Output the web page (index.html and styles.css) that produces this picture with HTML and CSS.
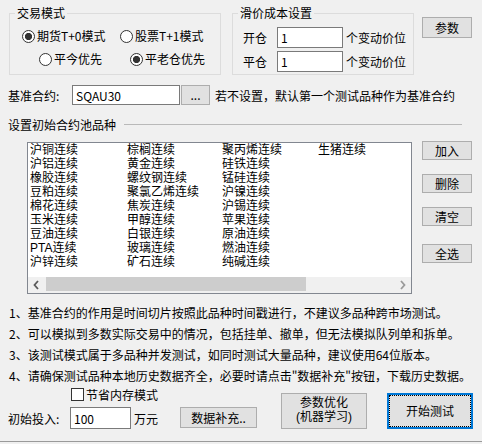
FILE: index.html
```html
<!DOCTYPE html>
<html lang="zh-CN">
<head>
    <meta charset="UTF-8">
    <title>多品种测试设置</title>
    <link rel="stylesheet" href="styles.css">
</head>
<body>
    <div class="window">
        <div class="top">
            <fieldset class="group mode">
                <legend>交易模式</legend>
                <div class="radio-row row-a">
                    <label class="radio w98 checked"><span class="dot"></span>期货T+0模式</label>
                    <label class="radio"><span class="dot"></span>股票T+1模式</label>
                </div>
                <div class="radio-row row-b">
                    <label class="radio w91"><span class="dot"></span>平今优先</label>
                    <label class="radio checked"><span class="dot"></span>平老仓优先</label>
                </div>
            </fieldset>
            <fieldset class="group slip">
                <legend>滑价成本设置</legend>
                <div class="slip-row">
                    <span class="slip-label">开仓</span>
                    <input type="text" class="field slip-input" value="1">
                    <span class="unit">个变动价位</span>
                </div>
                <div class="slip-row second">
                    <span class="slip-label">平仓</span>
                    <input type="text" class="field slip-input" value="1">
                    <span class="unit">个变动价位</span>
                </div>
            </fieldset>
            <button type="button" class="btn params-btn">参数</button>
        </div>

        <div class="base-row">
            <span class="base-label">基准合约:</span>
            <input type="text" class="field base-input" value="SQAU30">
            <button type="button" class="btn dots-btn">...</button>
            <span class="base-hint">若不设置，默认第一个测试品种作为基准合约</span>
        </div>

        <div class="pool-title">
            <span>设置初始合约池品种</span>
            <span class="pool-line"></span>
        </div>

        <div class="pool">
            <div class="listbox">
                <div class="items">
                    <span>沪铜连续</span><span>沪铝连续</span><span>橡胶连续</span>
                    <span>豆粕连续</span><span>棉花连续</span><span>玉米连续</span>
                    <span>豆油连续</span><span>PTA连续</span><span>沪锌连续</span>
                    <span>棕榈连续</span><span>黄金连续</span><span>螺纹钢连续</span>
                    <span>聚氯乙烯连续</span><span>焦炭连续</span><span>甲醇连续</span>
                    <span>白银连续</span><span>玻璃连续</span><span>矿石连续</span>
                    <span>聚丙烯连续</span><span>硅铁连续</span><span>锰硅连续</span>
                    <span>沪镍连续</span><span>沪锡连续</span><span>苹果连续</span>
                    <span>原油连续</span><span>燃油连续</span><span>纯碱连续</span>
                    <span>生猪连续</span>
                </div>
                <div class="hscroll">
                    <span class="arrow">
                        <svg width="17" height="16" viewBox="0 0 17 16"><path d="M10 4 L6.5 8 L10 12" fill="none" stroke="#5a5a5a" stroke-width="1.8"/></svg>
                    </span>
                    <span class="track"><span class="thumb"></span></span>
                    <span class="arrow">
                        <svg width="17" height="16" viewBox="0 0 17 16"><path d="M7 4 L10.5 8 L7 12" fill="none" stroke="#9a9a9a" stroke-width="1.8"/></svg>
                    </span>
                </div>
            </div>
            <div class="side-btns">
                <button type="button" class="btn side add">加入</button>
                <button type="button" class="btn side del">删除</button>
                <button type="button" class="btn side clear">清空</button>
                <button type="button" class="btn side all">全选</button>
            </div>
        </div>

        <div class="notes">
            <p>1、基准合约的作用是时间切片按照此品种时间戳进行，不建议多品种跨市场测试。</p>
            <p>2、可以模拟到多数实际交易中的情况，包括挂单、撤单，但无法模拟队列单和拆单。</p>
            <p>3、该测试模式属于多品种并发测试，如同时测试大量品种，建议使用64位版本。</p>
            <p>4、请确保测试品种本地历史数据齐全，必要时请点击"数据补充"按钮，下载历史数据。</p>
        </div>

        <div class="bottom">
            <div class="bottom-left">
                <label class="check"><span class="box"></span>节省内存模式</label>
                <div class="money-row">
                    <span class="money-label">初始投入:</span>
                    <input type="text" class="field money-input" value="100">
                    <span class="money-unit">万元</span>
                </div>
            </div>
            <button type="button" class="btn data-btn">数据补充..</button>
            <button type="button" class="btn opt-btn">参数优化<br>(机器学习)</button>
            <button type="button" class="btn start-btn">开始测试</button>
        </div>
    </div>
</body>
</html>
```

FILE: styles.css
```css
* {
    box-sizing: border-box;
}
body {
    margin: 0;
    background-color: #f0f0f0;
    font-family: "Noto Sans CJK SC", "Liberation Sans", sans-serif;
    font-size: 12px;
    color: #000;
}
.window {
    width: 482px;
    height: 442px;
    border-bottom: 1px solid #9a9a9a;
}

/* generic controls */
.btn {
    font: inherit;
    font-size: 12px;
    color: #000;
    background-color: #e1e1e1;
    border: 1px solid #adadad;
    border-radius: 0;
    padding: 0;
    margin: 0;
    line-height: 14px;
}
.field {
    font: inherit;
    font-size: 12px;
    color: #000;
    background-color: #fff;
    border: 1px solid #7a7a7a;
    border-radius: 0;
    padding: 0 3px;
    margin: 0;
    outline: none;
}

/* top group boxes */
.top {
    display: flex;
    align-items: flex-start;
    padding: 3px 0 0 9px;
}
.group {
    margin: 0;
    padding: 0 5px;
    border: 1px solid #dcdcdc;
    min-width: 0;
    height: 72px;
}
.group legend {
    padding: 0 2px;
    line-height: 20px;
}
.mode {
    width: 212px;
}
.slip {
    width: 182px;
    margin-left: 11px;
}
.radio-row {
    display: flex;
    height: 16px;
}
.row-a {
    margin: 5px 0 0 7px;
}
.row-b {
    margin: 7px 0 0 24px;
}
.radio {
    display: inline-flex;
    align-items: center;
    height: 16px;
    line-height: 16px;
}
.radio.w98 {
    width: 98px;
}
.radio.w91 {
    width: 91px;
}
.dot {
    width: 13px;
    height: 13px;
    border: 1px solid #333;
    border-radius: 50%;
    background: #fff;
    margin-right: 2px;
}
.radio.checked .dot {
    background: radial-gradient(circle, #333 3.3px, #fff 3.9px);
}
.slip-row {
    display: flex;
    align-items: center;
    margin-top: 4px;
    height: 21px;
}
.slip-row.second {
    margin-top: 3px;
}
.slip-label {
    width: 39px;
    padding-left: 5px;
}
.slip-input {
    width: 66px;
    height: 21px;
}
.unit {
    margin-left: 3px;
}
.params-btn {
    width: 50px;
    height: 21px;
    margin: 14px 0 0 8px;
}

/* base contract */
.base-row {
    display: flex;
    align-items: center;
    height: 20px;
    margin-top: 10px;
    padding-left: 8px;
}
.base-label {
    width: 64px;
}
.base-input {
    width: 108px;
    height: 20px;
}
.dots-btn {
    width: 29px;
    height: 20px;
    margin-left: 1px;
}
.base-hint {
    margin-left: 5px;
}

/* pool */
.pool-title {
    display: flex;
    align-items: center;
    height: 16px;
    margin-top: 11px;
    padding: 0 20px 0 8px;
}
.pool-line {
    flex: 1;
    margin-left: 8px;
    border-top: 1px solid #b9b9b9;
}
.pool {
    display: flex;
    margin-top: 9px;
}
.listbox {
    width: 385px;
    height: 152px;
    margin: 1px 0 0 27px;
    border: 1px solid #828790;
    background-color: #fff;
    display: flex;
    flex-direction: column;
}
.items {
    flex: 1;
    display: grid;
    grid-template-columns: 97px 95px 96px 96px;
    grid-template-rows: repeat(9, 14px);
    grid-auto-flow: column;
    padding-left: 2px;
    font-family: "Liberation Sans", "Noto Sans CJK SC", sans-serif;
    line-height: 14px;
    white-space: nowrap;
}
.hscroll {
    display: flex;
    height: 16px;
    background-color: #f0f0f0;
}
.arrow {
    width: 17px;
    display: flex;
}
.track {
    flex: 1;
    padding-left: 1px;
}
.thumb {
    display: block;
    width: 260px;
    height: 14px;
    background-color: #cdcdcd;
}
.side-btns {
    display: flex;
    flex-direction: column;
    margin-left: 10px;
}
.btn.side {
    width: 50px;
    height: 19px;
}
.side.del,
.side.clear {
    margin-top: 14px;
}
.side.all {
    margin-top: 18px;
}

/* notes */
.notes {
    margin-top: 8px;
    padding-left: 9px;
}
.notes p {
    margin: 0;
    line-height: 21px;
    white-space: nowrap;
}

/* bottom controls */
.bottom {
    display: flex;
    align-items: flex-end;
    padding-left: 8px;
}
.bottom-left {
    display: flex;
    flex-direction: column;
}
.check {
    display: flex;
    align-items: center;
    height: 14px;
    margin: 1px 0 0 63px;
}
.box {
    width: 13px;
    height: 13px;
    border: 1px solid #333;
    background: #fff;
    margin-right: 2px;
}
.money-row {
    display: flex;
    align-items: center;
    margin-top: 6px;
    height: 22px;
}
.money-label {
    width: 62px;
}
.money-input {
    width: 61px;
    height: 22px;
}
.money-unit {
    margin-left: 3px;
    width: 24px;
}
.data-btn {
    width: 77px;
    height: 21px;
    margin: 0 0 1px 22px;
}
.opt-btn {
    width: 86px;
    height: 36px;
    margin-left: 24px;
    padding-bottom: 3px;
    font-family: "Liberation Sans", "Noto Sans CJK SC", sans-serif;
}
.start-btn {
    width: 86px;
    height: 36px;
    margin-left: 20px;
    border: 2px solid #0078d7;
    outline: 1px dotted #000;
    outline-offset: -3px;
}
```
